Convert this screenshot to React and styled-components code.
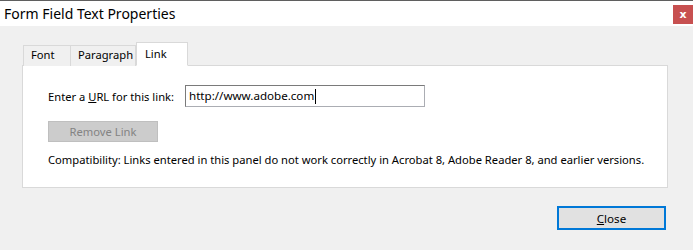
import styled, { createGlobalStyle } from "styled-components";

const GlobalStyle = createGlobalStyle`
  html, body {
    margin: 0;
    padding: 0;
    background: #f0f0f0;
  }
  body {
    font-family: "Noto Sans", "Open Sans", sans-serif;
    font-size: 11.2px;
    color: #000;
  }
`;

const Window = styled.div`
  width: 693px;
  height: 250px;
  box-sizing: border-box;
  border-top: 1px solid #5f5f5f;
  background: #f0f0f0;
  display: flex;
  flex-direction: column;
`;

const TitleBar = styled.div`
  height: 25px;
  background: #fff;
  display: flex;
  align-items: center;
  justify-content: space-between;
  padding-left: 4px;
`;

const Title = styled.div`
  font-size: 14px;
  color: #000;
  margin-top: -1px;
`;

const CloseX = styled.div`
  width: 20px;
  height: 19px;
  margin-top: 1px;
  background: #c75050;
  color: #fff;
  font-size: 11px;
  font-weight: bold;
  display: flex;
  align-items: center;
  justify-content: center;
  font-family: "DejaVu Sans", sans-serif;
`;

const Body = styled.div`
  flex: 1;
  padding: 17px 25px 0 22px;
  display: flex;
  flex-direction: column;
`;

const TabRow = styled.div`
  display: flex;
  align-items: flex-end;
  padding-left: 1px;
  height: 23px;
  position: relative;
  z-index: 1;
  margin-bottom: -1px;
`;

const Tab = styled.div`
  box-sizing: border-box;
  height: ${(p) => (p.$active ? "24px" : "21px")};
  padding: ${(p) => (p.$active ? "3px 6px 0 8px" : "1px 4px 0 7px")};
  border: 1px solid #d9d9d9;
  border-bottom: ${(p) => (p.$active ? "1px solid #fff" : "none")};
  border-left: ${(p) => (p.$first || p.$active ? "1px solid #d9d9d9" : "none")};
  background: ${(p) => (p.$active ? "#fff" : "#f0f0f0")};
  width: ${(p) => p.$w}px;
  white-space: nowrap;
  line-height: 16px;
`;

const Panel = styled.div`
  box-sizing: border-box;
  width: 646px;
  height: 123px;
  background: #fff;
  border: 1px solid #d9d9d9;
  padding: 19px 25px 0 25px;
  display: flex;
  flex-direction: column;
`;

const Row = styled.div`
  display: flex;
  align-items: center;
`;

const Label = styled.label`
  width: 137px;
  white-space: nowrap;
`;

const UrlInput = styled.div`
  box-sizing: border-box;
  width: 240px;
  height: 22px;
  border: 1px solid #abadb3;
  border-top-color: #7a7a7a;
  border-left-color: #7a7a7a;
  padding: 1px 3px;
  display: flex;
  align-items: center;
  line-height: 16px;
  font-size: 11.6px;
`;

const Caret = styled.span`
  display: inline-block;
  width: 1px;
  height: 15px;
  background: #000;
  margin-left: 1px;
`;

const DisabledButton = styled.div`
  box-sizing: border-box;
  width: 110px;
  height: 21px;
  margin-top: 14px;
  background: #cccccc;
  border: 1px solid #bfbfbf;
  color: #838383;
  display: flex;
  align-items: center;
  justify-content: center;
`;

const Note = styled.div`
  margin-top: 10px;
  white-space: nowrap;
`;

const Footer = styled.div`
  display: flex;
  justify-content: flex-end;
  padding-top: 18px;
  padding-right: 2px;
`;

const DefaultButton = styled.div`
  box-sizing: border-box;
  width: 109px;
  height: 24px;
  border: 2px solid #0078d7;
  background: #e1e1e1;
  display: flex;
  align-items: center;
  justify-content: center;
  font-size: 11.6px;
`;

const U = styled.span`
  text-decoration: underline;
`;

export default function App() {
  return (
    <>
      <GlobalStyle />
      <Window>
        <TitleBar>
          <Title>Form Field Text Properties</Title>
          <CloseX>x</CloseX>
        </TitleBar>
        <Body>
          <TabRow>
            <Tab $first $w={48}>Font</Tab>
            <Tab $w={65}>Paragraph</Tab>
            <Tab $active $w={52}>Link</Tab>
          </TabRow>
          <Panel>
            <Row>
              <Label>
                Enter a <U>U</U>RL for this link:
              </Label>
              <UrlInput>
                http://www.adobe.com
                <Caret />
              </UrlInput>
            </Row>
            <DisabledButton>Remove Link</DisabledButton>
            <Note>
              Compatibility: Links entered in this panel do not work correctly in
              Acrobat 8, Adobe Reader 8, and earlier versions.
            </Note>
          </Panel>
          <Footer>
            <DefaultButton>
              <span>
                <U>C</U>lose
              </span>
            </DefaultButton>
          </Footer>
        </Body>
      </Window>
    </>
  );
}
